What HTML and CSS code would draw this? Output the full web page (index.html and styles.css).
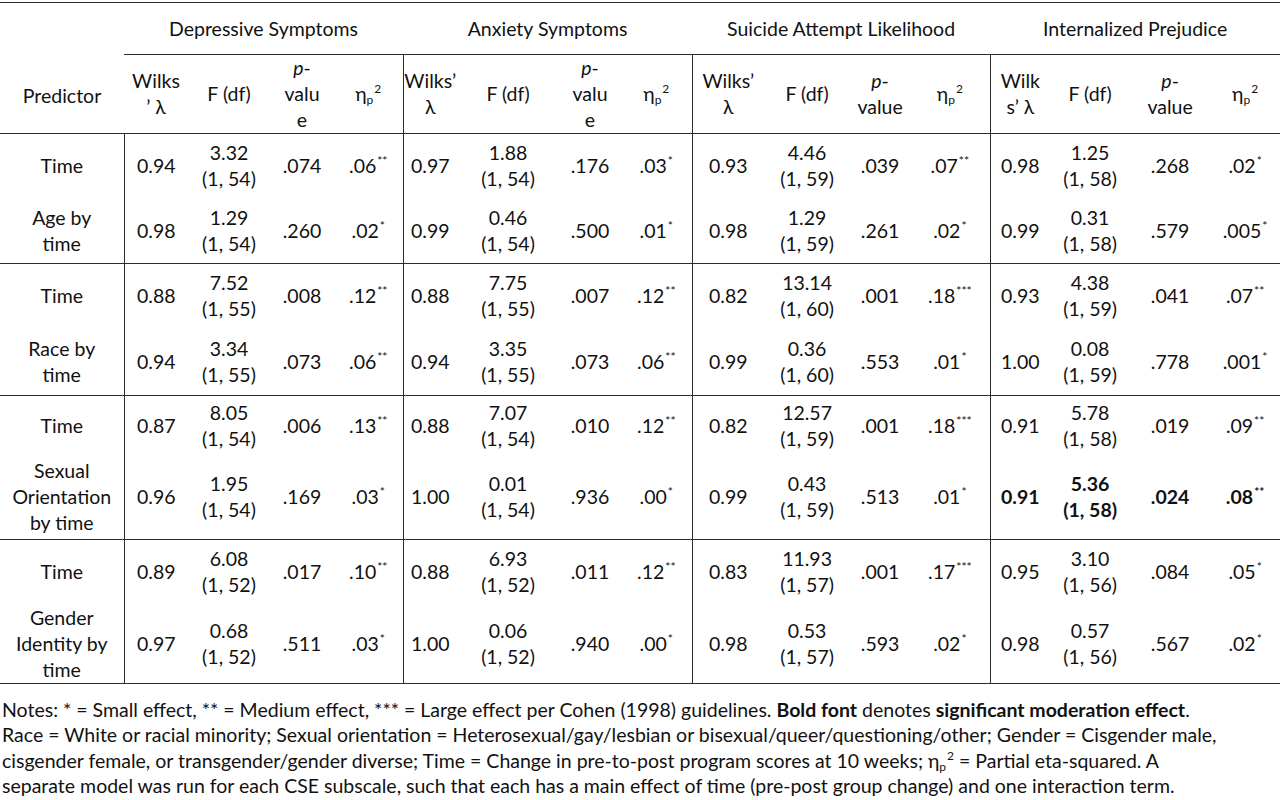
FILE: index.html
```html
<!DOCTYPE html>
<html lang="en">
<head>
  <meta charset="UTF-8" />
  <title>Moderation effects by predictor</title>
  <link rel="stylesheet" href="styles.css">
</head>
<body>
  <table class="results">
    <colgroup>
      <col><col><col><col><col><col><col><col><col><col><col><col><col><col><col><col><col>
    </colgroup>
    <thead>
      <tr class="groups">
        <th rowspan="2" class="pred">Predictor</th>
        <th colspan="4" class="grp">Depressive Symptoms</th>
        <th colspan="4" class="grp">Anxiety Symptoms</th>
        <th colspan="4" class="grp">Suicide Attempt Likelihood</th>
        <th colspan="4" class="grp">Internalized Prejudice</th>
      </tr>
      <tr class="stats">
        <th>Wilks<br>’ λ</th><th>F (df)</th><th><i>p</i>-<br>valu<br>e</th><th>η<sub>p</sub><sup>2</sup></th>
        <th class="first">Wilks’<br>λ</th><th>F (df)</th><th><i>p</i>-<br>valu<br>e</th><th>η<sub>p</sub><sup>2</sup></th>
        <th class="first">Wilks’<br>λ</th><th>F (df)</th><th><i>p</i>-<br>value</th><th>η<sub>p</sub><sup>2</sup></th>
        <th class="first">Wilk<br>s’ λ</th><th>F (df)</th><th><i>p</i>-<br>value</th><th>η<sub>p</sub><sup>2</sup></th>
      </tr>
    </thead>

    <!-- Age -->
    <tbody>
      <tr class="h65">
        <td>Time</td>
        <td class="first">0.94</td><td>3.32<br>(1, 54)</td><td>.074</td><td>.06<span class="star">**</span></td>
        <td class="first">0.97</td><td>1.88<br>(1, 54)</td><td>.176</td><td>.03<span class="star">*</span></td>
        <td class="first">0.93</td><td>4.46<br>(1, 59)</td><td>.039</td><td>.07<span class="star">**</span></td>
        <td class="first">0.98</td><td>1.25<br>(1, 58)</td><td>.268</td><td>.02<span class="star">*</span></td>
      </tr>
      <tr class="h65">
        <td>Age by<br>time</td>
        <td class="first">0.98</td><td>1.29<br>(1, 54)</td><td>.260</td><td>.02<span class="star">*</span></td>
        <td class="first">0.99</td><td>0.46<br>(1, 54)</td><td>.500</td><td>.01<span class="star">*</span></td>
        <td class="first">0.98</td><td>1.29<br>(1, 59)</td><td>.261</td><td>.02<span class="star">*</span></td>
        <td class="first">0.99</td><td>0.31<br>(1, 58)</td><td>.579</td><td>.005<span class="star">*</span></td>
      </tr>
    </tbody>

    <!-- Race -->
    <tbody>
      <tr class="h65">
        <td>Time</td>
        <td class="first">0.88</td><td>7.52<br>(1, 55)</td><td>.008</td><td>.12<span class="star">**</span></td>
        <td class="first">0.88</td><td>7.75<br>(1, 55)</td><td>.007</td><td>.12<span class="star">**</span></td>
        <td class="first">0.82</td><td>13.14<br>(1, 60)</td><td>.001</td><td>.18<span class="star">***</span></td>
        <td class="first">0.93</td><td>4.38<br>(1, 59)</td><td>.041</td><td>.07<span class="star">**</span></td>
      </tr>
      <tr class="h67">
        <td>Race by<br>time</td>
        <td class="first">0.94</td><td>3.34<br>(1, 55)</td><td>.073</td><td>.06<span class="star">**</span></td>
        <td class="first">0.94</td><td>3.35<br>(1, 55)</td><td>.073</td><td>.06<span class="star">**</span></td>
        <td class="first">0.99</td><td>0.36<br>(1, 60)</td><td>.553</td><td>.01<span class="star">*</span></td>
        <td class="first">1.00</td><td>0.08<br>(1, 59)</td><td>.778</td><td>.001<span class="star">*</span></td>
      </tr>
    </tbody>

    <!-- Sexual orientation -->
    <tbody>
      <tr class="h60">
        <td>Time</td>
        <td class="first">0.87</td><td>8.05<br>(1, 54)</td><td>.006</td><td>.13<span class="star">**</span></td>
        <td class="first">0.88</td><td>7.07<br>(1, 54)</td><td>.010</td><td>.12<span class="star">**</span></td>
        <td class="first">0.82</td><td>12.57<br>(1, 59)</td><td>.001</td><td>.18<span class="star">***</span></td>
        <td class="first">0.91</td><td>5.78<br>(1, 58)</td><td>.019</td><td>.09<span class="star">**</span></td>
      </tr>
      <tr class="h84">
        <td>Sexual<br>Orientation<br>by time</td>
        <td class="first">0.96</td><td>1.95<br>(1, 54)</td><td>.169</td><td>.03<span class="star">*</span></td>
        <td class="first">1.00</td><td>0.01<br>(1, 54)</td><td>.936</td><td>.00<span class="star">*</span></td>
        <td class="first">0.99</td><td>0.43<br>(1, 59)</td><td>.513</td><td>.01<span class="star">*</span></td>
        <td class="first sig">0.91</td><td class="sig">5.36<br>(1, 58)</td><td class="sig">.024</td><td class="sig">.08<span class="star">**</span></td>
      </tr>
    </tbody>

    <!-- Gender identity -->
    <tbody>
      <tr class="h65">
        <td>Time</td>
        <td class="first">0.89</td><td>6.08<br>(1, 52)</td><td>.017</td><td>.10<span class="star">**</span></td>
        <td class="first">0.88</td><td>6.93<br>(1, 52)</td><td>.011</td><td>.12<span class="star">**</span></td>
        <td class="first">0.83</td><td>11.93<br>(1, 57)</td><td>.001</td><td>.17<span class="star">***</span></td>
        <td class="first">0.95</td><td>3.10<br>(1, 56)</td><td>.084</td><td>.05<span class="star">*</span></td>
      </tr>
      <tr class="h77">
        <td>Gender<br>Identity by<br>time</td>
        <td class="first">0.97</td><td>0.68<br>(1, 52)</td><td>.511</td><td>.03<span class="star">*</span></td>
        <td class="first">1.00</td><td>0.06<br>(1, 52)</td><td>.940</td><td>.00<span class="star">*</span></td>
        <td class="first">0.98</td><td>0.53<br>(1, 57)</td><td>.593</td><td>.02<span class="star">*</span></td>
        <td class="first">0.98</td><td>0.57<br>(1, 56)</td><td>.567</td><td>.02<span class="star">*</span></td>
      </tr>
    </tbody>
  </table>

  <p class="notes">Notes: * = Small effect, ** = Medium effect, *** = Large effect per Cohen (1998) guidelines. <b>Bold font</b> denotes <b>significant moderation effect</b>.<br>Race = White or racial minority; Sexual orientation = Heterosexual/gay/lesbian or bisexual/queer/questioning/other; Gender = Cisgender male,<br>cisgender female, or transgender/gender diverse; Time = Change in pre-to-post program scores at 10 weeks; η<sub>p</sub><sup>2</sup> = Partial eta-squared. A<br>separate model was run for each CSE subscale, such that each has a main effect of time (pre-post group change) and one interaction term.</p>
</body>
</html>
```

FILE: styles.css
```css
* {
  box-sizing: border-box;
}

body {
  margin: 0;
  background: #fff;
  color: #111;
  font-family: Lato, "Open Sans", sans-serif;
  font-size: 19.5px;
  line-height: 26px;
}

.results {
  width: 1280px;
  table-layout: fixed;
  border-collapse: collapse;
  margin-top: 2px;
  border-top: 1px solid #2b2b2b;
  border-bottom: 1px solid #2b2b2b;
}

/* column widths: predictor, then 4 stats per outcome */
.results col:nth-child(1)  { width: 124px; }
.results col:nth-child(2)  { width: 64px; }
.results col:nth-child(3)  { width: 82px; }
.results col:nth-child(4)  { width: 64px; }
.results col:nth-child(5)  { width: 69px; }
.results col:nth-child(6)  { width: 54px; }
.results col:nth-child(7)  { width: 102px; }
.results col:nth-child(8)  { width: 62px; }
.results col:nth-child(9)  { width: 71px; }
.results col:nth-child(10) { width: 72px; }
.results col:nth-child(11) { width: 86px; }
.results col:nth-child(12) { width: 60px; }
.results col:nth-child(13) { width: 80px; }
.results col:nth-child(14) { width: 60px; }
.results col:nth-child(15) { width: 80px; }
.results col:nth-child(16) { width: 80px; }
.results col:nth-child(17) { width: 70px; }

.results th,
.results td {
  font-weight: normal;
  text-align: center;
  vertical-align: middle;
  padding: 0;
  white-space: nowrap;
}

.groups { height: 52px; }
.groups .grp { border-bottom: 1px solid #2b2b2b; }

/* predictor label sits level with the stat labels */
.results th.pred {
  vertical-align: bottom;
  padding-bottom: 24px;
}

.stats { height: 78px; }
.results thead tr.stats th,
.results th.pred { border-bottom: 1px solid #2b2b2b; }

.results tbody { border-top: 1px solid #2b2b2b; }

.results .first { border-left: 1px solid #2b2b2b; }

.h60 { height: 60px; }
.h65 { height: 65px; }
.h67 { height: 67px; }
.h77 { height: 77px; }
.h84 { height: 84px; }

.sig { font-weight: bold !important; }

.star {
  font-size: 12px;
  line-height: 0;
  vertical-align: 8px;
  margin-left: 1px;
}

sub, sup {
  font-size: 12px;
  line-height: 0;
}
sub { vertical-align: -3px; }
sup { vertical-align: 8px; margin-left: 1px; }

.notes {
  margin: 13px 0 0;
  padding-left: 2px;
  white-space: nowrap;
  font-size: 19.5px;
  line-height: 25.5px;
}
```
